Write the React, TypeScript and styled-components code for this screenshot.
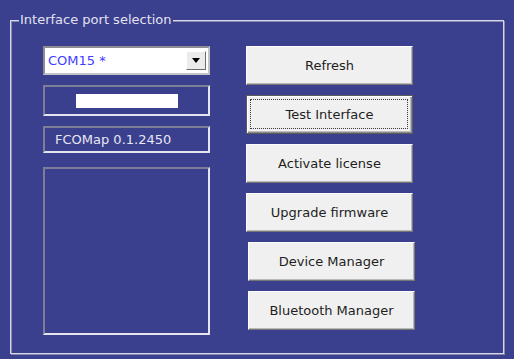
import React from "react";
import styled, { createGlobalStyle, css } from "styled-components";

const GlobalStyle = createGlobalStyle`
  html, body {
    margin: 0;
    padding: 0;
    background: #3a3f8e;
  }
  body {
    font-family: "DejaVu Sans", Tahoma, sans-serif;
    font-size: 13px;
  }
`;

const Page = styled.div`
  width: 514px;
  height: 359px;
  box-sizing: border-box;
  padding: 20px 10px 5px 10px;
`;

const Frame = styled.section`
  position: relative;
  box-sizing: border-box;
  width: 494px;
  height: 334px;
  border: 1px solid #d6d8e8;
  box-shadow: inset 1px 1px 0 #8589b0, 1px 1px 0 #8589b0;
  padding: 25px 0 0 32px;
  display: flex;
  gap: 36px;
`;

const Caption = styled.span`
  position: absolute;
  top: -9px;
  left: 8px;
  padding: 0 1px;
  line-height: 16px;
  background: #3a3f8e;
  color: #e2e3ef;
`;

const LeftColumn = styled.div`
  width: 167px;
  display: flex;
  flex-direction: column;
  gap: 10px;
`;

const Combo = styled.div`
  box-sizing: border-box;
  height: 29px;
  display: flex;
  align-items: center;
  justify-content: space-between;
  background: #ffffff;
  border: 2px solid #c4c4c8;
  border-top-color: #8e8e92;
  border-left-color: #8e8e92;
  padding: 0 2px 0 3px;
  color: #3d3dff;
`;

const DropButton = styled.div`
  box-sizing: border-box;
  width: 20px;
  height: 19px;
  display: flex;
  align-items: center;
  justify-content: center;
  background: #ebebeb;
  border: 1px solid;
  border-color: #ffffff #6c6c6c #6c6c6c #ffffff;

  &::before {
    content: "";
    border-left: 4px solid transparent;
    border-right: 4px solid transparent;
    border-top: 5px solid #000;
  }
`;

const Sunken = styled.div<{ $h: number; $gapTop?: number }>`
  box-sizing: border-box;
  height: ${(p) => p.$h}px;
  margin-top: ${(p) => p.$gapTop ?? 0}px;
  border: 2px solid;
  border-color: #7d7f98 #e4e5ef #e4e5ef #7d7f98;
  display: flex;
  align-items: center;
`;

const WhiteBar = styled.div`
  width: 102px;
  height: 14px;
  margin: 0 auto;
  background: #ffffff;
`;

const InfoText = styled.span`
  padding-left: 10px;
  color: #e6e7f0;
`;

const RightColumn = styled.div`
  display: flex;
  flex-direction: column;
  gap: 10px;
`;

const Button = styled.button<{ $shift?: number; $focused?: boolean }>`
  position: relative;
  box-sizing: border-box;
  width: 167px;
  height: 39px;
  margin-left: ${(p) => p.$shift ?? 0}px;
  padding: 0;
  font-family: "DejaVu Sans", Tahoma, sans-serif;
  font-size: 13px;
  color: #1e1e1e;
  background: #f0f0f0;
  border: 1px solid;
  border-color: #fdfdfd #767676 #767676 #fdfdfd;
  box-shadow: inset -1px -1px 0 #b9b9b9;

  ${(p) =>
    p.$focused &&
    css`
      border-color: #5c5c5c;
      box-shadow: inset 1px 1px 0 #ffffff, inset -1px -1px 0 #8a8a8a,
        inset -2px -2px 0 #bdbdbd;

      &::after {
        content: "";
        position: absolute;
        inset: 3px 4px 4px 3px;
        border: 1px dotted #3a3a3a;
      }
    `}
`;

const buttons = [
  { label: "Refresh" },
  { label: "Test Interface", focused: true },
  { label: "Activate license" },
  { label: "Upgrade firmware" },
  { label: "Device Manager", shift: 2 },
  { label: "Bluetooth Manager", shift: 2 },
];

export default function App() {
  return (
    <>
      <GlobalStyle />
      <Page>
        <Frame>
          <Caption>Interface port selection</Caption>
          <LeftColumn>
            <Combo>
              <span>COM15 *</span>
              <DropButton />
            </Combo>
            <Sunken $h={31}>
              <WhiteBar />
            </Sunken>
            <Sunken $h={27}>
              <InfoText>FCOMap 0.1.2450</InfoText>
            </Sunken>
            <Sunken $h={168} $gapTop={4} />
          </LeftColumn>
          <RightColumn>
            {buttons.map((b) => (
              <Button key={b.label} $shift={b.shift} $focused={b.focused}>
                {b.label}
              </Button>
            ))}
          </RightColumn>
        </Frame>
      </Page>
    </>
  );
}
